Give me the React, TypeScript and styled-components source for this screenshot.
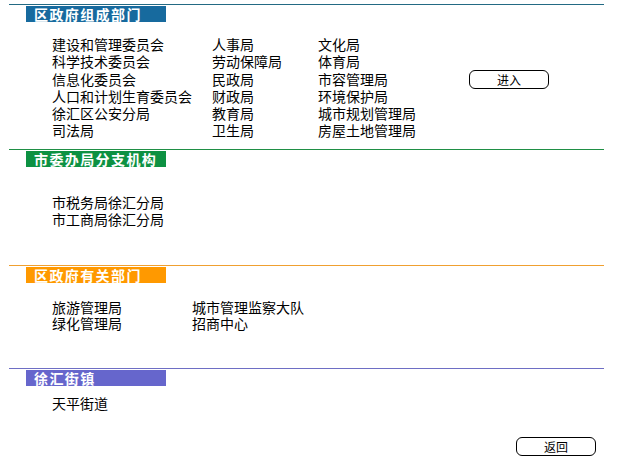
import React from "react";
import styled, { createGlobalStyle } from "styled-components";

const Global = createGlobalStyle`
  html, body { margin: 0; padding: 0; background: #fff; }
  body { font-family: "Noto Sans CJK SC", "Liberation Sans", sans-serif; color: #000; }
`;

const Page = styled.div`
  width: 595px;
  margin-left: 9px;
  padding-top: 4px;
`;

const Section = styled.section<{ $line: string; $h: number }>`
  border-top: 1px solid ${(p) => p.$line};
  height: ${(p) => p.$h}px;
  box-sizing: border-box;
  padding-top: 1px;
`;

const Header = styled.div<{ $bg: string }>`
  margin-left: 17px;
  width: 132px;
  height: 16px;
  padding-left: 8px;
  background: ${(p) => p.$bg};
  color: #fff;
  font-family: "Noto Sans CJK SC", serif;
  font-weight: 700;
  font-size: 14px;
  line-height: 16px;
  letter-spacing: 1.4px;
`;

const Body = styled.div<{ $top: number; $cols: string; $lh: number }>`
  padding-top: ${(p) => p.$top}px;
  padding-left: 43px;
  display: grid;
  grid-template-columns: ${(p) => p.$cols};
  grid-auto-rows: ${(p) => p.$lh}px;
  font-size: 14px;
  line-height: ${(p) => p.$lh}px;
  white-space: nowrap;
`;

const Item = styled.div<{ $col: number; $row: number }>`
  grid-column: ${(p) => p.$col};
  grid-row: ${(p) => p.$row};
`;

const Pill = styled.button<{ $col?: number; $row?: number }>`
  grid-column: ${(p) => p.$col ?? "auto"};
  grid-row: ${(p) => p.$row ?? "auto"};
  align-self: center;
  width: 80px;
  height: 19px;
  padding: 0;
  border: 1px solid #000;
  border-radius: 6px;
  background: #fff;
  font-family: "Noto Sans CJK SC", sans-serif;
  font-size: 12px;
  line-height: 17px;
  color: #000;
`;

const Footer = styled.div`
  display: flex;
  justify-content: flex-end;
  padding-right: 8px;
`;

const col1 = ["建设和管理委员会", "科学技术委员会", "信息化委员会", "人口和计划生育委员会", "徐汇区公安分局", "司法局"];
const col2 = ["人事局", "劳动保障局", "民政局", "财政局", "教育局", "卫生局"];
const col3 = ["文化局", "体育局", "市容管理局", "环境保护局", "城市规划管理局", "房屋土地管理局"];

export default function App() {
  return (
    <>
      <Global />
      <Page>
        <Section $line="#236a84" $h={145}>
          <Header $bg="#176a9e">区政府组成部门</Header>
          <Body $top={14} $cols="160px 106px 151px 80px" $lh={17.3}>
            {col1.map((t, i) => (
              <Item key={t} $col={1} $row={i + 1}>{t}</Item>
            ))}
            {col2.map((t, i) => (
              <Item key={t} $col={2} $row={i + 1}>{t}</Item>
            ))}
            {col3.map((t, i) => (
              <Item key={t} $col={3} $row={i + 1}>{t}</Item>
            ))}
            <Pill $col={4} $row={3}>进入</Pill>
          </Body>
        </Section>
        <Section $line="#1f8f45" $h={116}>
          <Header $bg="#0d9142">市委办局分支机构</Header>
          <Body $top={27} $cols="160px" $lh={16.5}>
            <Item $col={1} $row={1}>市税务局徐汇分局</Item>
            <Item $col={1} $row={2}>市工商局徐汇分局</Item>
          </Body>
        </Section>
        <Section $line="#f0a030" $h={103}>
          <Header $bg="#ff9900">区政府有关部门</Header>
          <Body $top={16} $cols="140px 160px" $lh={16.3}>
            <Item $col={1} $row={1}>旅游管理局</Item>
            <Item $col={1} $row={2}>绿化管理局</Item>
            <Item $col={2} $row={1}>城市管理监察大队</Item>
            <Item $col={2} $row={2}>招商中心</Item>
          </Body>
        </Section>
        <Section $line="#6e6ec4" $h={69}>
          <Header $bg="#6666cc">徐汇街镇</Header>
          <Body $top={9} $cols="160px" $lh={17}>
            <Item $col={1} $row={1}>天平街道</Item>
          </Body>
        </Section>
        <Footer>
          <Pill>返回</Pill>
        </Footer>
      </Page>
    </>
  );
}
